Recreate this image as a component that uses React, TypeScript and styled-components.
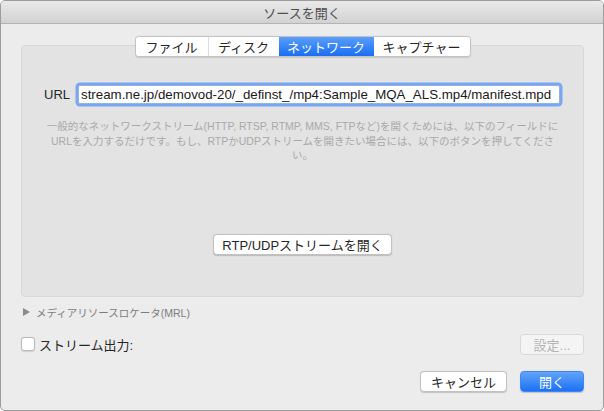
import React from "react";
import styled, { createGlobalStyle } from "styled-components";

const Global = createGlobalStyle`
  html, body { margin: 0; padding: 0; background: #ffffff; }
  * { box-sizing: border-box; }
  body { font-family: "Liberation Sans", "Noto Sans CJK JP", sans-serif; }
`;

const Window = styled.div`
  width: 604px;
  height: 411px;
  border: 1px solid #9c9c9c;
  border-radius: 5px;
  overflow: hidden;
  background: #ececec;
  display: flex;
  flex-direction: column;
`;

const TitleBar = styled.div`
  height: 23px;
  flex: none;
  border-bottom: 1px solid #b3b3b3;
  background: linear-gradient(#e9e9e9, #d2d2d2);
  display: flex;
  align-items: center;
  justify-content: center;
  font-size: 13px;
  color: #4d4d4d;
`;

const Content = styled.div`
  padding: 0 19px 0 20px;
  display: flex;
  flex-direction: column;
`;

const Tabs = styled.div`
  position: relative;
  z-index: 1;
  align-self: center;
  margin-top: 12px;
  height: 21px;
  display: flex;
  border: 1px solid #c3c3c3;
  border-radius: 4px;
  background: #ffffff;
  overflow: hidden;
  box-shadow: 0 0.5px 1px rgba(0, 0, 0, 0.12);
`;

const Tab = styled.div<{ $active?: boolean; $w: number; $sep?: boolean }>`
  width: ${(p) => p.$w}px;
  display: flex;
  align-items: center;
  justify-content: center;
  font-size: 13px;
  color: ${(p) => (p.$active ? "#ffffff" : "#262626")};
  background: ${(p) => (p.$active ? "linear-gradient(#5a9ef9, #1a6ef4)" : "#ffffff")};
  border-left: ${(p) => (p.$sep ? "1px solid #dcdcdc" : "none")};
`;

const Panel = styled.div`
  margin-top: -12px;
  height: 252px;
  background: #e3e3e3;
  border: 1px solid #d8d8d8;
  border-radius: 4px;
  display: flex;
  flex-direction: column;
  align-items: center;
`;

const UrlRow = styled.div`
  align-self: stretch;
  margin: 39px 23px 0 22px;
  display: flex;
  align-items: center;
  gap: 8px;
`;

const UrlLabel = styled.span`
  font-size: 13px;
  color: #262626;
`;

const UrlInput = styled.div`
  flex: 1;
  height: 19px;
  background: #ffffff;
  border: 1px solid #8fb3ee;
  box-shadow: 0 0 0 2.5px #7aa8f0;
  border-radius: 2px;
  font-size: 13.3px;
  color: #1a1a1a;
  display: flex;
  align-items: center;
  padding-left: 2px;
  white-space: nowrap;
  overflow: hidden;
`;

const Description = styled.div`
  margin-top: 15px;
  font-size: 10.5px;
  line-height: 14.5px;
  color: #a9a9a9;
  text-align: center;
  white-space: nowrap;
`;

const PushButton = styled.button<{ $w: number; $primary?: boolean; $disabled?: boolean }>`
  width: ${(p) => p.$w}px;
  height: 21px;
  padding: 0;
  font-family: "Liberation Sans", "Noto Sans CJK JP", sans-serif;
  font-size: 13px;
  border-radius: 4px;
  display: flex;
  align-items: center;
  justify-content: center;
  color: ${(p) => (p.$primary ? "#ffffff" : p.$disabled ? "#b4b4b4" : "#262626")};
  background: ${(p) =>
    p.$primary ? "linear-gradient(#62a4f9, #1c70f4)" : p.$disabled ? "#f4f4f4" : "#ffffff"};
  border: 1px solid ${(p) => (p.$primary ? "#3f86f4" : p.$disabled ? "#d9d9d9" : "#c2c2c2")};
  box-shadow: ${(p) => (p.$disabled ? "none" : "0 0.5px 1px rgba(0,0,0,0.18)")};
`;

const RtpButton = styled(PushButton)`
  margin-top: 71px;
`;

const MrlRow = styled.div`
  margin-top: 8px;
  height: 14px;
  display: flex;
  align-items: center;
  gap: 6px;
  padding-left: 2px;
  font-size: 10.5px;
  color: #7c7c7c;
`;

const Triangle = styled.span`
  width: 0;
  height: 0;
  border-top: 4.5px solid transparent;
  border-bottom: 4.5px solid transparent;
  border-left: 7px solid #8a8a8a;
`;

const OutputRow = styled.div`
  margin-top: 15px;
  height: 20px;
  display: flex;
  align-items: center;
  justify-content: space-between;
`;

const CheckLabel = styled.label`
  display: flex;
  align-items: center;
  gap: 4px;
  font-size: 13px;
  color: #262626;
`;

const CheckBox = styled.span`
  width: 14px;
  height: 14px;
  border: 1px solid #b8b8b8;
  border-radius: 3px;
  background: #ffffff;
  box-shadow: 0 0.5px 1px rgba(0, 0, 0, 0.12);
`;

const ButtonRow = styled.div`
  margin-top: 17px;
  display: flex;
  justify-content: flex-end;
  gap: 13px;
`;

export default function App() {
  return (
    <>
      <Global />
      <Window>
        <TitleBar>ソースを開く</TitleBar>
        <Content>
          <Tabs>
            <Tab $w={72}>ファイル</Tab>
            <Tab $w={71} $sep>ディスク</Tab>
            <Tab $w={95} $active>ネットワーク</Tab>
            <Tab $w={96}>キャプチャー</Tab>
          </Tabs>
          <Panel>
            <UrlRow>
              <UrlLabel>URL</UrlLabel>
              <UrlInput>stream.ne.jp/demovod-20/_definst_/mp4:Sample_MQA_ALS.mp4/manifest.mpd</UrlInput>
            </UrlRow>
            <Description>
              一般的なネットワークストリーム(HTTP, RTSP, RTMP, MMS, FTPなど)を開くためには、以下のフィールドに
              <br />
              URLを入力するだけです。もし、RTPかUDPストリームを開きたい場合には、以下のボタンを押してくださ
              <br />
              い。
            </Description>
            <RtpButton $w={179}>RTP/UDPストリームを開く</RtpButton>
          </Panel>
          <MrlRow>
            <Triangle />
            メディアリソースロケータ(MRL)
          </MrlRow>
          <OutputRow>
            <CheckLabel>
              <CheckBox />
              ストリーム出力:
            </CheckLabel>
            <PushButton $w={64} $disabled>設定...</PushButton>
          </OutputRow>
          <ButtonRow>
            <PushButton $w={87}>キャンセル</PushButton>
            <PushButton $w={64} $primary>開く</PushButton>
          </ButtonRow>
        </Content>
      </Window>
    </>
  );
}
